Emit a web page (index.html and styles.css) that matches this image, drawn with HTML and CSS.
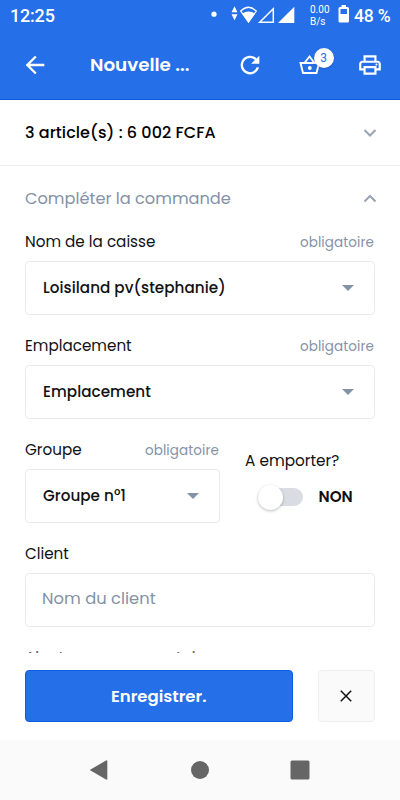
FILE: index.html
```html
<!DOCTYPE html>
<html lang="fr">
<head>
<meta charset="utf-8">
<title>Nouvelle commande</title>
<link rel="stylesheet" href="styles.css">
</head>
<body>
<div class="status">
  <span class="clock">12:25</span>
  <svg class="signals" width="94" height="24" viewBox="0 0 94 24" fill="#fff">
    <circle cx="8" cy="12.200" r="2.600"/>
    <path d="M25.500 10.300l3-6 3 6zM25.500 12.200l3 6 3-6z"/>
    <path d="M34.700 9Q42.500 1.500 50.300 9L42.500 20z" fill="none" stroke="#fff" stroke-width="1.200"/>
    <path d="M36 11.500Q42.500 7.500 49 11.500L42.500 21z"/>
    <path d="M53.700 20.300L67.300 6.800V20.300z" fill="none" stroke="#fff" stroke-width="1.500"/>
    <path d="M72 21L88.300 4.700V21z"/>
  </svg>
  <span class="rate">0.00<br>B/s</span>
  <svg class="battery" width="12" height="18" viewBox="0 0 12 18"><path fill="#fff" fill-rule="evenodd" d="M3.500 0h4.500v2h1.500Q11 2 11 3.500v12.500Q11 17.500 9.500 17.500H2Q.5 17.500.5 16V3.500Q.5 2 2 2h1.500zM2.500 4v5h6.500V4z"/></svg>
  <span class="percent">48 %</span>
</div>
<header class="bar">
  <svg class="back" width="28" height="28" viewBox="0 0 24 24" fill="#fff"><path d="M20 11H7.830l5.590-5.590L12 4l-8 8 8 8 1.410-1.410L7.830 13H20z"/></svg>
  <h1 class="title">Nouvelle ...</h1>
  <svg class="refresh" width="28" height="28" viewBox="0 0 24 24" fill="#fff"><path d="M17.650 6.350A8 8 0 1 0 19.730 14h-2.080A6 6 0 1 1 12 6c1.660 0 3.140.69 4.220 1.780L13 11h7V4z"/></svg>
  <div class="basket">
    <svg width="22" height="22" viewBox="0 0 22 22" fill="none" stroke="#fff" stroke-width="1.900"><path d="M1.500 9h18.500l-2.500 10h-13.500zM5.500 9L10.500 2.500l5 6.500"/><circle cx="10.800" cy="14" r="1.900" fill="#fff" stroke="none"/></svg>
    <span class="badge">3</span>
  </div>
  <svg class="print" width="26" height="26" viewBox="0 0 24 24" fill="#fff"><path d="M19 8h-1V3H6v5H5c-1.660 0-3 1.340-3 3v6h4v4h12v-4h4v-6c0-1.660-1.340-3-3-3zM8 5h8v3H8zm8 14H8v-4h8zm2-4v-2H6v2H4v-4c0-.55.45-1 1-1h14c.55 0 1 .45 1 1v4z"/><circle cx="18" cy="11.500" r="1"/></svg>
</header>
<main class="content">
  <section class="fold summary"><span>3 article(s) : 6 002 FCFA</span>
    <svg width="14" height="10" viewBox="0 0 14 10"><path class="chev" d="M1.500 2l5.500 5.500L12.500 2"/></svg></section>
  <section class="fold complete"><span>Compléter la commande</span>
    <svg width="14" height="10" viewBox="0 0 14 10"><path class="chev" d="M1.500 7.500L7 2l5.500 5.500"/></svg></section>
  <form class="form">
    <div class="field">
      <div class="label"><span>Nom de la caisse</span><span class="req">obligatoire</span></div>
      <div class="box"><span>Loisiland pv(stephanie)</span><i class="caret"></i></div>
    </div>
    <div class="field">
      <div class="label"><span>Emplacement</span><span class="req">obligatoire</span></div>
      <div class="box"><span>Emplacement</span><i class="caret"></i></div>
    </div>
    <div class="split">
      <div class="field group">
        <div class="label"><span>Groupe</span><span class="req">obligatoire</span></div>
        <div class="box"><span>Groupe n°1</span><i class="caret"></i></div>
      </div>
      <div class="takeaway">
        <span class="t-take">A emporter?</span>
        <div class="switch"><div class="track"><div class="thumb"></div></div><b class="t-non">NON</b></div>
      </div>
    </div>
    <div class="field">
      <div class="label"><span>Client</span></div>
      <div class="box input"><span>Nom du client</span></div>
    </div>
    <div class="label comment"><span>Ajouter un commentaire</span></div>
  </form>
</main>
<div class="actions">
  <div class="save"><span>Enregistrer.</span></div>
  <div class="close"><svg width="12" height="12" viewBox="0 0 12 12"><path d="M.8.8l10.400 10.400M11.200.8L.8 11.200" stroke="#111" stroke-width="1.500"/></svg></div>
</div>
<nav class="nav">
  <svg width="222" height="24" viewBox="-1 0 222 24" fill="#666"><path d="M-.3 12L16 2.500q1.300-.5 1.300.5v18q0 1-1.300.5z"/><circle cx="110" cy="12" r="9"/><rect x="200.500" y="2.500" width="19" height="19" rx="1.500"/></svg>
</nav>
</body>
</html>
```

FILE: styles.css
```css
* { box-sizing: border-box; }
body { margin: 0; width: 400px; height: 800px; overflow: hidden; display: flex; flex-direction: column; background: #fff; color: #101114; font-family: Poppins, Inter, sans-serif; font-size: 14px; }
span, b, h1 { white-space: nowrap; }
svg { display: block; flex: none; }
.status { height: 32px; background: #256fe9; color: #fff; font-family: Roboto, sans-serif; display: flex; align-items: center; flex: none; }
.clock { width: 196px; padding: 0 0 1px 10px; font-size: 18px; font-weight: 500; letter-spacing: -.2px; }
.signals { margin: 2px 0 0 10px; align-self: flex-start; }
.rate { width: 28px; margin-left: 10px; font-size: 10px; line-height: 12px; padding-bottom: 1px; }
.battery { margin-top: -4px; }
.percent { margin-left: 4px; font-size: 17.500px; font-weight: 500; letter-spacing: -.2px; }
.bar { height: 68px; background: #256fe9; border-bottom: 1px solid #0b58d8; display: flex; align-items: center; padding: 0 0 1px 21px; color: #fff; flex: none; }
.title { margin: 0 0 0 41px; width: 146px; font-size: 18.300px; line-height: 26px; font-weight: 600; }
.basket { position: relative; margin-left: 35px; width: 22px; }
.badge { position: absolute; left: 14.500px; top: -6px; width: 20px; height: 20px; border-radius: 50%; background: #fff; color: #256fe9; font: 12px/20px Roboto, sans-serif; text-align: center; box-shadow: 0 1px 2px #0003; }
.print { margin-left: 36px; }
.content { height: 553px; overflow: hidden; flex: none; }
.fold { display: flex; align-items: center; justify-content: space-between; padding: 0 23px 0 25px; }
.summary { height: 66px; border-bottom: 1px solid #eee; font-weight: 500; font-size: 16px; color: #000; letter-spacing: .05px; }
.complete { height: 65px; font-size: 16.200px; color: #8492a6; }
.chev { fill: none; stroke: #98a3b3; stroke-width: 2; }
.form { padding: 0 25px; }
.field { height: 104px; }
.label { height: 21px; line-height: 22px; display: flex; justify-content: space-between; font-size: 15.200px; }
.req { color: #8492a6; font-size: 13.500px; letter-spacing: .1px; padding-right: 1px; line-height: 23px; }
.box { height: 54px; margin-top: 9px; border: 1px solid #e9eaed; border-radius: 4px; display: flex; align-items: center; justify-content: space-between; padding: 0 20px 1px 17px; font-weight: 500; font-size: 15.200px; letter-spacing: .04px; }
.caret { border: 6px solid transparent; border-top-color: #8492a6; border-bottom: 0; margin-top: 1px; }
.split { display: flex; gap: 25px; }
.group { width: 195px; }
.takeaway { width: 130px; padding-top: 11px; line-height: 21px; }
.t-take { font-size: 15.300px; }
.switch { display: flex; align-items: center; height: 26px; margin-top: 12px; padding-left: 12.500px; }
.track { width: 45px; height: 18px; border-radius: 9px; background: #d9dce2; display: flex; align-items: center; }
.thumb { width: 25px; height: 25px; flex: none; border-radius: 50%; background: #fff; box-shadow: 0 1px 3px #0004; }
.t-non { margin: -2px 0 0 16px; font-weight: 600; font-size: 15.200px; }
.input { padding: 0 16px 3px; color: #8492a6; font-weight: 400; font-size: 16.300px; }
.comment { line-height: 21px; color: #555; }
.actions { height: 87px; padding: 17px 25px 0; display: flex; gap: 25px; flex: none; }
.save { width: 267.500px; height: 52px; border-radius: 4px; background: #256fe9; border: 1px solid #0b5de3; color: #fff; font-weight: 600; font-size: 16.500px; display: flex; align-items: center; justify-content: center; }
.close { width: 57.500px; height: 52px; border: 1px solid #eee; border-radius: 4px; background: #fafafa; display: flex; align-items: center; justify-content: center; }
.nav { height: 60px; background: #fafafa; display: flex; align-items: center; justify-content: center; flex: none; }
```
